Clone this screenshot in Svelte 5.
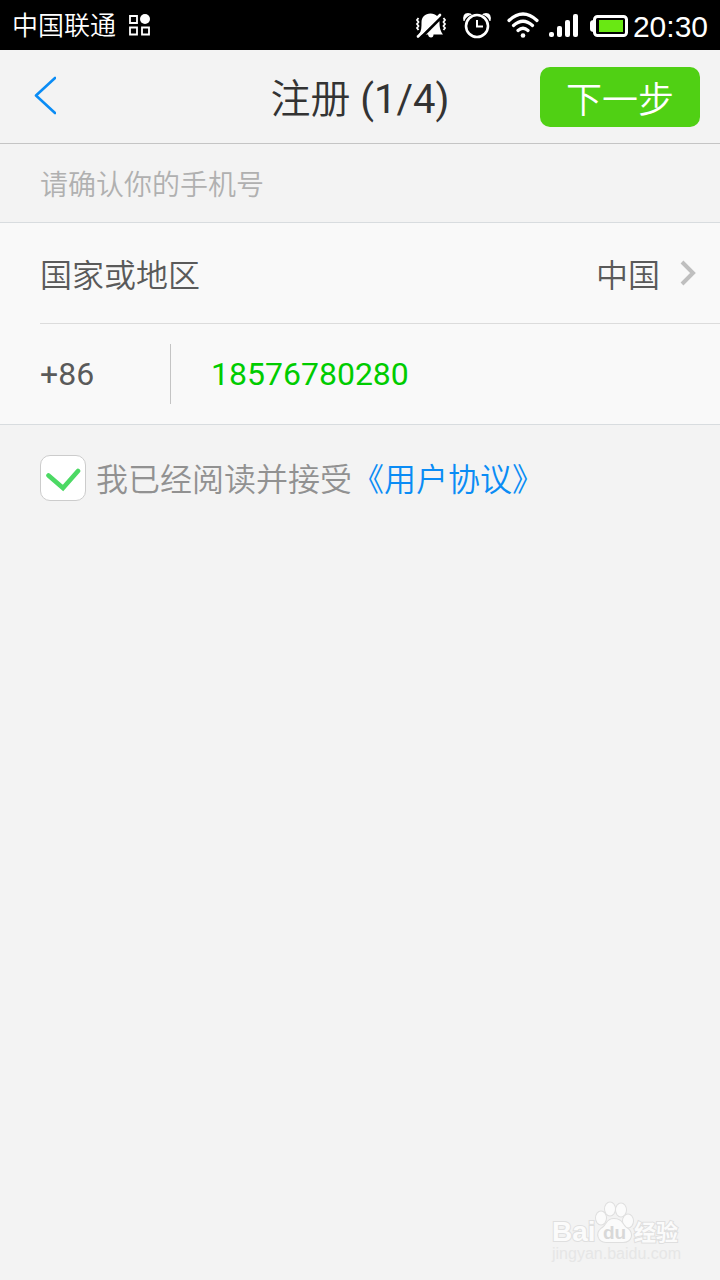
<script>
  let agreed = $state(true);
  let phone = $state('18576780280');
</script>

<div class="screen">
  <div class="status">
    <span class="carrier">中国联通</span>
    <svg class="apps" width="24" height="24" viewBox="0 0 24 24" fill="none" stroke="#fff" stroke-width="1.800">
      <path d="M2 3h7v7h-7zM2 14.500h7v7h-7zM14 14.500h7v7h-7z" />
      <circle cx="17" cy="6" r="5" fill="#fff" stroke="none" />
    </svg>
    <div class="indicators">
      <svg width="32" height="28" viewBox="0 0 32 28" fill="none" stroke="#fff">
        <path fill="#fff" stroke="none" d="M15.500 1.500C21 1.500 24.500 5 24.500 10.500C24.500 16 25.500 19 28 22.500H18.500Q18.500 25.500 16 25.500T13 22.500H4C6.500 19 6.500 15 6.500 10.500C6.500 5 10 1.500 15.500 1.500z" />
        <path stroke="#000" stroke-width="3" d="M29 2.500L4.500 27" />
        <path stroke-width="2.600" stroke-linecap="round" d="M3 24.500L25 3" />
        <path stroke-width="1.800" d="M3.500 6L2 8l1.500 2L2 12l1.500 2L2 16l1.500 2M28.500 6L30 8l-1.500 2L30 12l-1.500 2L30 16l-1.500 2" />
      </svg>
      <svg width="30" height="28" viewBox="0 0 30 28" fill="none" stroke="#fff" stroke-width="2.600">
        <circle cx="15" cy="14" r="11" />
        <path stroke-width="2" d="M15 8v6.500h6" />
        <path fill="#fff" stroke="none" d="M1.500 9Q0 1 6 1q3 0 4 1.500Q4 4 2.500 9zM28.500 9q1.500-8-4.500-8-3 0-4 1.500 6 1.500 7.500 6.500z" />
      </svg>
      <svg width="32" height="28" viewBox="0 0 32 28" fill="none" stroke="#fff" stroke-width="3.200" stroke-linecap="round">
        <path d="M2 8.500Q16-4.500 30 8.500M6.500 13.500Q16 5 25.500 13.500M11 18.500Q16 14 21 18.500" />
        <circle cx="16" cy="23.500" r="2.300" fill="#fff" stroke="none" />
      </svg>
    </div>
    <div class="power">
      <svg width="30" height="28" viewBox="0 0 30 28" fill="#fff">
        <rect x="1" y="20" width="5" height="5" rx="2" />
        <rect x="9" y="14" width="5" height="11" rx="2" />
        <rect x="17" y="8" width="5" height="17" rx="2" />
        <rect x="25" y="2" width="5" height="23" rx="2" />
      </svg>
      <svg width="38" height="28" viewBox="0 0 38 28">
        <path fill="#fff" d="M4 8Q0 8 0 11v6q0 3 4 3z" />
        <rect x="4.500" y="4.500" width="32" height="19" rx="3" fill="#000" stroke="#fff" stroke-width="3" />
        <rect x="9" y="8" width="24" height="12" fill="#69e813" />
      </svg>
    </div>
    <time>20:30</time>
  </div>

  <header>
    <button class="back" aria-label="返回">
      <svg width="24" height="40" viewBox="0 0 24 40" fill="none" stroke="#0a8cf5" stroke-width="2.600" stroke-linecap="round" stroke-linejoin="round">
        <path d="M23 2L4 19.500 23 37" />
      </svg>
    </button>
    <h1>注册 <span class="digits">(1/4)</span></h1>
    <button class="next">下一步</button>
  </header>

  <main>
    <label class="hint" for="phone">请确认你的手机号</label>
    <div class="group">
      <button class="row country">
        <span>国家或地区</span>
        <span class="value">中国</span>
        <svg width="18" height="26" viewBox="0 0 18 26" fill="none" stroke="#bfbfbf" stroke-width="4">
          <path d="M3 2L14 13 3 24" />
        </svg>
      </button>
      <div class="row">
        <span class="code digits">+86</span>
        <input id="phone" class="digits" type="tel" bind:value={phone} />
      </div>
    </div>
    <div class="agree">
      <input id="agree" type="checkbox" bind:checked={agreed} />
      <label class="box" for="agree" aria-hidden="true">
        <svg width="36" height="28" viewBox="0 0 36 28" fill="none" stroke="#4cd964" stroke-width="4.600">
          <path stroke-linecap="round" d="M3.500 11.500L18 24 33 7" />
        </svg>
      </label>
      <label class="terms" for="agree">我已经阅读并接受</label><a class="terms" href="#terms">《用户协议》</a>
    </div>
  </main>

  <svg class="mark" width="132" height="66" viewBox="0 0 132 66" fill="#fbfbfb" stroke="#dfdfdf">
    <g paint-order="stroke" stroke-width="2">
      <text x="2" y="41" font-size="28" font-weight="700">Bai</text>
      <ellipse cx="51" cy="18" rx="5" ry="6.500" />
      <ellipse cx="60" cy="9" rx="5" ry="6.500" />
      <ellipse cx="71" cy="10" rx="5" ry="6.500" />
      <ellipse cx="78" cy="21" rx="5" ry="6.500" />
      <path d="M64 19C56 19 57 26 51 29C46 33 48 42 56 42H73C82 42 83 33 78 29C72 26 73 19 64 19z" />
      <text x="53" y="39" font-size="19" font-weight="700" fill="#d8d8d8" stroke="none">du</text>
      <text x="84" y="40" font-size="22" font-weight="700">经验</text>
      <text x="2" y="59" font-size="16" fill="#e6e6e6" stroke="none">jingyan.baidu.com</text>
    </g>
  </svg>
</div>

<style>
  :global(body) {
    margin: 0;
    background: #f3f3f3;
  }
  .screen {
    position: relative;
    min-height: 100vh;
    font-family: Roboto, "Noto Sans CJK SC", sans-serif;
    font-size: 32px;
    font-weight: 350;
    color: #5a5a5a;
    background: #f3f3f3;
  }
  button,
  input {
    margin: 0;
    padding: 0;
    border: 0;
    background: none;
    color: inherit;
    font: inherit;
  }
  svg {
    display: block;
    flex: none;
  }
  .digits {
    font-weight: 400;
  }
  .status {
    display: flex;
    align-items: center;
    height: 50px;
    padding: 0 12px;
    background: #000;
    color: #fff;
  }
  .carrier {
    padding-top: 2px;
    font-size: 26px;
    line-height: 48px;
  }
  .apps {
    margin-left: 12px;
  }
  .indicators,
  .power {
    display: flex;
    padding-top: 2px;
  }
  .indicators {
    gap: 15px;
    margin-left: auto;
  }
  .power {
    gap: 12px;
    margin-left: 9px;
  }
  time {
    margin-left: 5px;
    padding-top: 4px;
    font-family: "Liberation Sans", sans-serif;
    font-size: 30px;
    line-height: 46px;
  }
  header {
    display: grid;
    grid-template-columns: 1fr auto 1fr;
    align-items: center;
    height: 93px;
    padding: 0 20px;
    border-bottom: 1px solid #c4c4c4;
  }
  .back {
    justify-self: start;
    padding: 0 12px 2px;
  }
  h1 {
    margin: 0;
    padding-top: 6px;
    font-size: 40px;
    font-weight: inherit;
    line-height: 60px;
    color: #333;
  }
  .next {
    justify-self: end;
    width: 160px;
    height: 60px;
    border-radius: 10px;
    background: #50d014;
    color: #fff;
    font-size: 36px;
  }
  .hint {
    display: block;
    padding: 6px 40px 0;
    font-size: 28px;
    line-height: 72px;
    color: #b0b0b0;
  }
  .group {
    background: #f9f9f9;
    border-top: 1px solid #d8dcdf;
    border-bottom: 1px solid #d8dcdf;
    padding-left: 40px;
  }
  .row {
    display: flex;
    align-items: center;
    width: 100%;
    height: 100px;
  }
  .country {
    box-sizing: content-box;
    border-bottom: 1px solid #dcdcdc;
  }
  .value {
    margin-left: auto;
    margin-right: 19px;
  }
  .country svg {
    margin-right: 23px;
  }
  .code {
    box-sizing: border-box;
    width: 131px;
    line-height: 60px;
    border-right: 1px solid #c4c4c4;
  }
  #phone {
    flex: 1;
    min-width: 0;
    padding-left: 40px;
    line-height: 60px;
    color: #00cc00;
    outline: none;
  }
  .agree {
    display: flex;
    align-items: center;
    padding: 30px 40px;
    color: #919191;
  }
  #agree {
    position: absolute;
    opacity: 0;
  }
  .box {
    display: flex;
    align-items: center;
    justify-content: center;
    box-sizing: border-box;
    width: 46px;
    height: 46px;
    margin-right: 10px;
    border: 1px solid #ccc;
    border-radius: 10px;
    background: #fff;
  }
  .box svg {
    visibility: hidden;
  }
  #agree:checked + .box svg {
    visibility: visible;
  }
  .terms {
    padding-top: 4px;
    line-height: 42px;
  }
  a {
    color: #0a8cf5;
    text-decoration: none;
  }
  .mark {
    position: absolute;
    right: 38px;
    bottom: 14px;
    font-family: "Liberation Sans", "Noto Sans CJK SC", sans-serif;
  }
</style>
